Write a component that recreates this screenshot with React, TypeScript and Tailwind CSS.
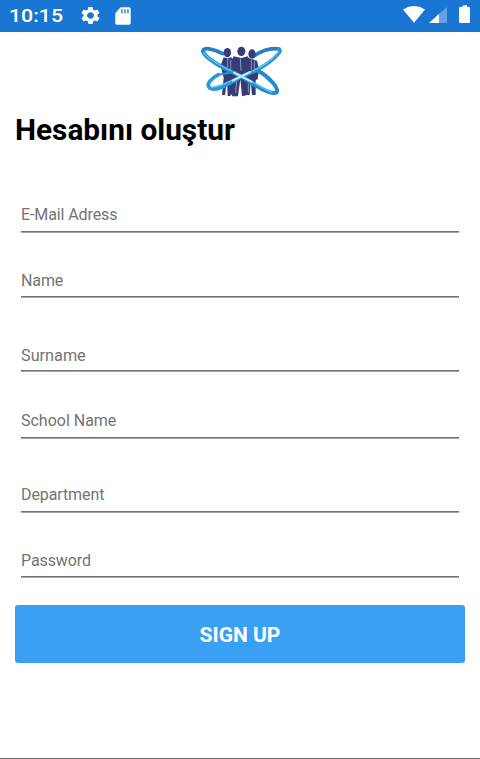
type Field = { label: string; row: string; text: string };

const fields: Field[] = [
  { label: "E-Mail Adress", row: "h-[79px] pb-[9px]", text: "text-[16px] tracking-[-0.1px]" },
  { label: "Name", row: "h-[65px] pb-[8px]", text: "text-[16px] tracking-[-0.1px]" },
  { label: "Surname", row: "h-[74px] pb-[8px]", text: "text-[17px] scale-x-[0.955]" },
  { label: "School Name", row: "h-[67px] pb-[10px]", text: "text-[17px] scale-x-[0.94]" },
  { label: "Department", row: "h-[74px] pb-[9px]", text: "text-[16px] tracking-[-0.1px]" },
  { label: "Password", row: "h-[65px] pb-[8px]", text: "text-[16px] tracking-[-0.1px]" },
];

function StatusBar() {
  return (
    <header className="flex h-8 shrink-0 items-center bg-[#1976d2] text-white">
      <span className="ml-[9px] w-[54px] whitespace-nowrap text-[19px] font-medium leading-8">
        <span className="inline-block origin-left scale-x-[1.12]">10:15</span>
      </span>
      <svg className="-mt-px ml-[15.5px] h-[21px] w-[23px]" viewBox="0 0 24 24" fill="currentColor" preserveAspectRatio="none">
        <path d="M19.14 12.94c.04-.3.06-.61.06-.94 0-.32-.02-.64-.07-.94l2.03-1.58c.18-.14.23-.41.12-.61l-1.92-3.32c-.12-.22-.37-.29-.59-.22l-2.39.96c-.5-.38-1.03-.7-1.62-.94l-.36-2.54c-.04-.24-.24-.41-.48-.41h-3.84c-.24 0-.43.17-.47.41l-.36 2.54c-.59.24-1.13.57-1.62.94l-2.39-.96c-.22-.08-.47 0-.59.22L2.74 8.87c-.12.21-.08.47.12.61l2.03 1.58c-.05.3-.09.63-.09.94s.02.64.07.94l-2.03 1.58c-.18.14-.23.41-.12.61l1.92 3.32c.12.22.37.29.59.22l2.39-.96c.5.38 1.03.7 1.62.94l.36 2.54c.05.24.24.41.48.41h3.84c.24 0 .44-.17.47-.41l.36-2.54c.59-.24 1.13-.56 1.62-.94l2.39.96c.22.08.47 0 .59-.22l1.92-3.32c.12-.22.07-.47-.12-.61l-2.01-1.58zM12 15.6c-1.98 0-3.6-1.62-3.6-3.6s1.62-3.6 3.6-3.6 3.6 1.62 3.6 3.6-1.62 3.6-3.6 3.6z" />
      </svg>
      <svg className="-mt-px ml-[13.5px] h-[18px] w-4" viewBox="0 0 16 18">
        <path d="M5.5.3H14q1.7 0 1.7 1.700v14q0 1.700-1.700 1.700H2Q.3 17.700.3 16V6.200z" fill="#fff" />
        <path d="M6 2.200h1.800v4H6zM9 2.200h1.800v4H9zM12 2.200h1.800v4H12z" fill="#4e96dd" />
      </svg>
      <svg className="-mt-0.5 ml-auto mr-[10px] h-5 w-[69px]" viewBox="401 5 69 20">
        <path d="M403 9.400Q414 2.800 425 9.400L414 22.700z" fill="#fff" />
        <path d="M447 7v16h-18z" fill="#63a3e2" />
        <path d="M439 14.100V23h-10z" fill="#fff" />
        <path d="M461 6.700h2V5.200h4v1.500h1.500q1.500 0 1.500 1.500v13.300q0 1.500-1.500 1.500h-8q-1.500 0-1.500-1.500V8.200q0-1.500 1.500-1.500z" fill="#fff" />
      </svg>
    </header>
  );
}

function Logo() {
  return (
    <svg className="ml-[190px] mt-1 h-[70px] w-[100px] shrink-0" viewBox="0 0 300 210" fill="none" strokeLinecap="round" strokeLinejoin="round">
      <path d="M39 45C38 33 68 37 98 53M190 61C218 42 246 35 267 39" stroke="#287fc2" strokeWidth="11" />
      <g fill="#343d78">
        <ellipse cx="112" cy="50" rx="11" ry="14" />
        <path d="M101 64l11 3 12-3 9 12v92l-13 12h-7l-2-47-6 44h-9l5-51-9-38z" />
        <ellipse cx="186" cy="54" rx="11" ry="14" />
        <path d="M174 66l12 3 15 5 6 26-4 30-6 2v45h-11l-4-43-3 43h-12l-4-70z" />
        <ellipse cx="154" cy="46" rx="12" ry="14" />
        <path d="M131 61l23 5 20-5 9 22-6 42-6 6-2 47-13 3-5-52-7 52h-18l5-64-13-27z" />
      </g>
      <path d="M113 67v35M122 72v35M151 68l2 35M184 71v29M193 75v27M140 132l-3 38M175 130v38" stroke="#8b98bd" strokeWidth="3" />
      <path d="M85 116C66 126 46 145 59 156C77 168 116 145 153 122C202 105 251 75 269 48C271 43 270 41 267 39" stroke="#2b97d8" strokeWidth="11" />
      <path d="M39 46C46 67 102 98 154 121C190 144 241 180 260 169C267 156 236 121 204 104" stroke="#238bd0" strokeWidth="12" />
      <path d="M41 51C58 72 107 98 154 119C190 137 222 161 246 169M64 153C84 156 117 137 155 119C199 103 241 78 265 48" stroke="#5cc4ed" strokeWidth="4" />
      <path d="M85 116l52-9M180 112l23-7" stroke="#2f8fcf" strokeWidth="6" />
      <path d="M132 110l52 27M128 134l52-26" stroke="#c2eaf7" strokeWidth="6" />
    </svg>
  );
}

export default function App() {
  return (
    <main className="flex h-[759px] w-[480px] flex-col overflow-hidden border-b border-[#6c6b70] bg-white font-['Roboto',sans-serif]">
      <StatusBar />
      <Logo />
      <h1 className="ml-[15px] mt-[5px] h-[43px] whitespace-nowrap text-[29px] font-bold leading-[38px] text-black">
        <span className="inline-block origin-left scale-x-[1.027]">Hesabını oluştur</span>
      </h1>
      <form className="flex flex-col px-[15px]">
        {fields.map((field) => (
          <div key={field.label} className={`mx-1.5 flex items-end border-b border-[#a5a5a5] shadow-[inset_0_-1px_0_#737373] ${field.row}`}>
            <label className={`origin-left whitespace-nowrap leading-4 text-[#737373] ${field.text}`}>{field.label}</label>
          </div>
        ))}
        <button type="button" className="mt-[27px] h-[58px] rounded-[3px] bg-[#3aa0f4] pt-[3px] text-[21px] font-bold leading-[55px] text-white">
          SIGN UP
        </button>
      </form>
    </main>
  );
}
